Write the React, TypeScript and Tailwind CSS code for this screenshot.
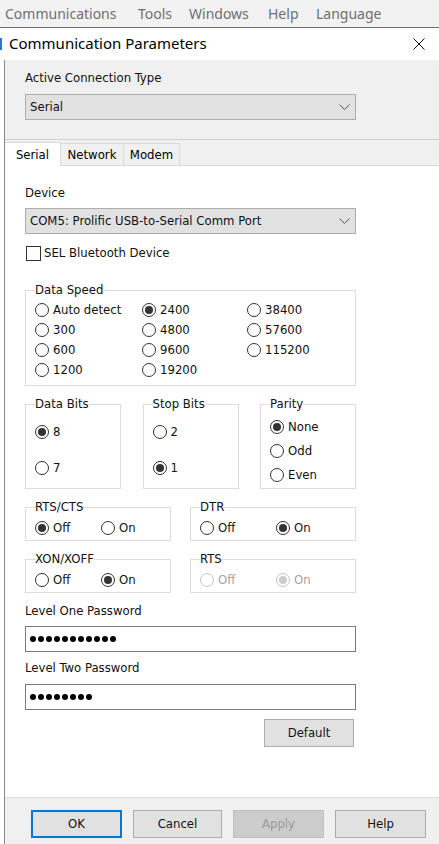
import React from 'react'

type RadioProps = { label: string; checked?: boolean; disabled?: boolean }

const Radio = ({ label, checked, disabled }: RadioProps) => (
  <span className="flex items-center gap-[4px] h-[20px] whitespace-nowrap">
    <span
      className={
        disabled
          ? 'w-[14px] h-[14px] shrink-0 rounded-full border border-[#c4c4c4] bg-white flex items-center justify-center'
          : 'w-[14px] h-[14px] shrink-0 rounded-full border border-[#333333] bg-white flex items-center justify-center'
      }
    >
      {checked && (
        <span className={disabled ? 'w-[8px] h-[8px] rounded-full bg-[#cccccc]' : 'w-[8px] h-[8px] rounded-full bg-[#333333]'} />
      )}
    </span>
    <span className={disabled ? 'text-[#a3a3a3]' : 'text-[#111111]'}>{label}</span>
  </span>
)

type GroupProps = { title: string; className?: string; children: React.ReactNode }

const Group = ({ title, className, children }: GroupProps) => (
  <fieldset className={'border border-[#dcdcdc] px-[9px] ' + (className ?? '')}>
    <legend className="leading-[16px] text-[#111111]">{title}</legend>
    {children}
  </fieldset>
)

const Chevron = () => (
  <svg width="11" height="7" viewBox="0 0 11 7" className="mr-[5px]">
    <path d="M0.5 0.5 L5.5 5.5 L10.5 0.5" fill="none" stroke="#555555" strokeWidth="1" />
  </svg>
)

const Select = ({ value }: { value: string }) => (
  <div className="w-[331px] h-[26px] bg-[#e1e1e1] border border-[#adadad] flex items-center justify-between pl-[4px]">
    <span className="text-[#111111]">{value}</span>
    <Chevron />
  </div>
)

const Dots = ({ count }: { count: number }) => (
  <div className="w-[331px] h-[26px] bg-white border border-[#7a7a7a] flex items-center gap-[2px] pl-[4px]">
    {Array.from({ length: count }).map((_, i) => (
      <span key={i} className="w-[6px] h-[6px] rounded-full bg-black" />
    ))}
  </div>
)

export default function App() {
  return (
    <div className="w-[439px] h-[844px] overflow-hidden bg-white flex flex-col font-['DejaVu_Sans_Condensed','DejaVu_Sans',sans-serif] text-[13px] leading-[16px]">
      {/* menu bar */}
      <div className="h-[28px] shrink-0 bg-[#f2f2f2] border-b border-[#6e6e6e] flex items-center pl-[5px] font-['Noto_Sans',sans-serif] text-[14px] text-[#6f6f6f]">
        <span className="w-[133px]">Communications</span>
        <span className="w-[51px]">Tools</span>
        <span className="w-[79px]">Windows</span>
        <span className="w-[48px]">Help</span>
        <span>Language</span>
      </div>

      {/* title bar */}
      <div className="h-[32px] shrink-0 flex items-center bg-white font-['Noto_Sans',sans-serif] text-[15px] text-black">
        <span className="w-[2px] h-[12px] bg-[#2b78d0]" />
        <span className="ml-[7px] -mt-[2px]">Communication Parameters</span>
        <svg width="12" height="12" viewBox="0 0 12 12" className="ml-auto mr-[14px]">
          <path d="M0.5 0.5 L11.5 11.5 M11.5 0.5 L0.5 11.5" stroke="#111111" strokeWidth="1" />
        </svg>
      </div>

      <div className="flex-1 flex">
        <div className="w-[4px] bg-white" />
        <div className="flex-1 flex flex-col bg-[#f0f0f0] border-l border-[#8a8a8a]">
          {/* connection type */}
          <div className="h-[79px] pl-[20px] pt-[10px]">
            <div className="text-[#111111]">Active Connection Type</div>
            <div className="mt-[8px]">
              <Select value="Serial" />
            </div>
          </div>

          {/* tabs */}
          <div className="h-[26px] border-t border-[#cfcfcf] flex items-end">
            <div className="w-[56px] h-[24px] bg-white border-t border-r border-[#d9d9d9] flex items-center justify-center -mb-px relative">
              Serial
            </div>
            <div className="w-[63px] h-[22px] border-t border-r border-[#d9d9d9] flex items-center justify-center">Network</div>
            <div className="w-[56px] h-[22px] border-t border-r border-[#d9d9d9] flex items-center justify-center">Modem</div>
          </div>

          {/* serial panel */}
          <div className="flex-1 bg-white border-t border-[#d9d9d9] pl-[20px] pt-[19px] flex flex-col">
            <div className="text-[#111111]">Device</div>
            <div className="mt-[7px]">
              <Select value="COM5: Prolific USB-to-Serial Comm Port" />
            </div>
            <div className="mt-[11px] flex items-center gap-[3px]">
              <span className="w-[15px] h-[15px] ml-px border border-[#333333] bg-white" />
              <span className="text-[#111111]">SEL Bluetooth Device</span>
            </div>

            <Group title="Data Speed" className="w-[331px] mt-[21px] pt-[2px] pb-[5px]">
              <div className="grid grid-flow-col grid-rows-4 grid-cols-[107px_105px_1fr]">
                <Radio label="Auto detect" />
                <Radio label="300" />
                <Radio label="600" />
                <Radio label="1200" />
                <Radio label="2400" checked />
                <Radio label="4800" />
                <Radio label="9600" />
                <Radio label="19200" />
                <Radio label="38400" />
                <Radio label="57600" />
                <Radio label="115200" />
              </div>
            </Group>

            <div className="w-[331px] mt-[10px] flex justify-between items-start">
              <Group title="Data Bits" className="w-[96px] pt-[10px] pb-[10px]">
                <div className="flex flex-col gap-[16px]">
                  <Radio label="8" checked />
                  <Radio label="7" />
                </div>
              </Group>
              <Group title="Stop Bits" className="w-[96px] pt-[10px] pb-[10px]">
                <div className="flex flex-col gap-[16px]">
                  <Radio label="2" />
                  <Radio label="1" checked />
                </div>
              </Group>
              <Group title="Parity" className="w-[96px] pt-[5px] pb-[3px]">
                <div className="flex flex-col gap-[4px]">
                  <Radio label="None" checked />
                  <Radio label="Odd" />
                  <Radio label="Even" />
                </div>
              </Group>
            </div>

            <div className="w-[331px] mt-[10px] flex justify-between">
              <Group title="RTS/CTS" className="w-[146px] pt-[3px] pb-[2px]">
                <div className="flex">
                  <div className="w-[66px]"><Radio label="Off" checked /></div>
                  <Radio label="On" />
                </div>
              </Group>
              <Group title="DTR" className="w-[166px] pt-[3px] pb-[2px]">
                <div className="flex">
                  <div className="w-[76px]"><Radio label="Off" /></div>
                  <Radio label="On" checked />
                </div>
              </Group>
            </div>

            <div className="w-[331px] mt-[10px] flex justify-between">
              <Group title="XON/XOFF" className="w-[146px] pt-[3px] pb-[2px]">
                <div className="flex">
                  <div className="w-[66px]"><Radio label="Off" /></div>
                  <Radio label="On" checked />
                </div>
              </Group>
              <Group title="RTS" className="w-[166px] pt-[3px] pb-[2px]">
                <div className="flex">
                  <div className="w-[76px]"><Radio label="Off" disabled /></div>
                  <Radio label="On" checked disabled />
                </div>
              </Group>
            </div>

            <div className="mt-[10px] text-[#111111]">Level One Password</div>
            <div className="mt-[7px]">
              <Dots count={11} />
            </div>
            <div className="mt-[8px] text-[#111111]">Level Two Password</div>
            <div className="mt-[8px]">
              <Dots count={8} />
            </div>
            <div className="w-[331px] mt-[9px] flex justify-end">
              <button className="w-[90px] h-[28px] mr-[2px] bg-[#e1e1e1] border border-[#adadad] text-[#111111]">Default</button>
            </div>
          </div>

          {/* dialog buttons */}
          <div className="h-[47px] shrink-0 border-t border-[#dfdfdf] pt-[12px] pl-[26px] flex items-start gap-[11px]">
            <button className="w-[91px] h-[28px] bg-[#e1e1e1] border-2 border-[#0078d7] text-[#111111]">OK</button>
            <button className="w-[89px] h-[28px] bg-[#e1e1e1] border border-[#adadad] text-[#111111]">Cancel</button>
            <button className="w-[91px] h-[28px] bg-[#cccccc] border border-[#bfbfbf] text-[#9a9a9a]">Apply</button>
            <button className="w-[91px] h-[28px] bg-[#e1e1e1] border border-[#adadad] text-[#111111]">Help</button>
          </div>
        </div>
      </div>
    </div>
  )
}
